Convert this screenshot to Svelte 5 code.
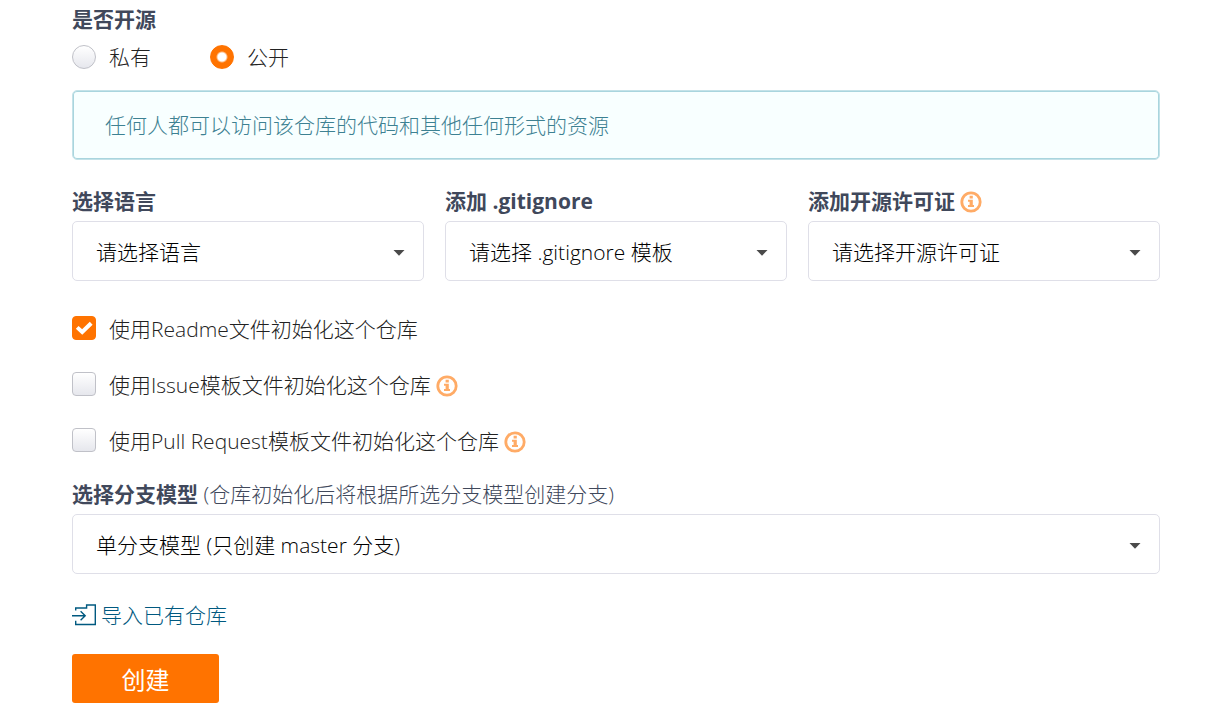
<script lang="ts">
	let visibility = $state('public');
	let language = $state('');
	let gitignore = $state('');
	let license = $state('');
	let branchModel = $state('single');
	let useReadme = $state(true);
	let useIssue = $state(false);
	let usePull = $state(false);

	function handleSubmit(event: SubmitEvent) {
		event.preventDefault();
	}
</script>

{#snippet infoIcon()}
	<svg class="info" width="22" height="22" viewBox="0 0 22 22" aria-hidden="true">
		<circle cx="11" cy="11" r="9.2" fill="none" stroke="currentColor" stroke-width="2.8" />
		<path d="M9.6 4.8h3.2v2.6H9.6zM8 8.8h4.8v5.3H14V16H8v-1.9h1.6v-3.4H8z" fill="currentColor" />
	</svg>
{/snippet}

{#snippet caret()}
	<svg class="caret" width="12" height="6" viewBox="0 0 12 6" aria-hidden="true">
		<path d="M0.5 0h11L6 5.8z" fill="#4a4a4a" />
	</svg>
{/snippet}

<form class="repo-form" onsubmit={handleSubmit}>
	<fieldset class="visibility">
		<legend class="title">是否开源</legend>
		<div class="radios">
			<label class="choice">
				<input type="radio" name="visibility" value="private" bind:group={visibility} />
				<span>私有</span>
			</label>
			<label class="choice">
				<input type="radio" name="visibility" value="public" bind:group={visibility} />
				<span>公开</span>
			</label>
		</div>
	</fieldset>

	<div class="notice">任何人都可以访问该仓库的代码和其他任何形式的资源</div>

	<div class="columns">
		<div class="field">
			<label class="title" for="language">选择语言</label>
			<div class="select">
				<select id="language" bind:value={language}>
					<option value="">请选择语言</option>
				</select>
				{@render caret()}
			</div>
		</div>
		<div class="field">
			<label class="title" for="gitignore">添加 .gitignore</label>
			<div class="select">
				<select id="gitignore" bind:value={gitignore}>
					<option value="">请选择 .gitignore 模板</option>
				</select>
				{@render caret()}
			</div>
		</div>
		<div class="field">
			<label class="title" for="license">添加开源许可证{@render infoIcon()}</label>
			<div class="select">
				<select id="license" bind:value={license}>
					<option value="">请选择开源许可证</option>
				</select>
				{@render caret()}
			</div>
		</div>
	</div>

	<div class="checks">
		<label class="choice">
			<input type="checkbox" bind:checked={useReadme} />
			<span>使用Readme文件初始化这个仓库</span>
		</label>
		<label class="choice">
			<input type="checkbox" bind:checked={useIssue} />
			<span>使用Issue模板文件初始化这个仓库{@render infoIcon()}</span>
		</label>
		<label class="choice">
			<input type="checkbox" bind:checked={usePull} />
			<span>使用Pull Request模板文件初始化这个仓库{@render infoIcon()}</span>
		</label>
	</div>

	<div class="field">
		<label class="title" for="branch-model">选择分支模型 <small>(仓库初始化后将根据所选分支模型创建分支)</small></label>
		<div class="select">
			<select id="branch-model" bind:value={branchModel}>
				<option value="single">单分支模型 (只创建 master 分支)</option>
			</select>
			{@render caret()}
		</div>
	</div>

	<a class="import" href="#import">
		<svg width="25" height="24" viewBox="0 0 25 24" fill="none" stroke="currentColor" stroke-width="1.4" aria-hidden="true">
			<path d="M3.7 7.5V5H14.6V2h8.7v19.5H3.7V17.8" />
			<path d="M0 12.7h13M8.6 8.2l4.6 4.5-4.6 4.5" />
		</svg>
		<span>导入已有仓库</span>
	</a>

	<button class="submit" type="submit">创建</button>
</form>

<style>
	:global(body) {
		background: #fff;
	}

	.repo-form {
		display: flex;
		flex-direction: column;
		padding: 4px 55px 24px 72px;
		font-family: 'Open Sans', 'Noto Sans CJK SC', sans-serif;
		font-size: 21px;
		font-weight: 300;
		line-height: 30px;
		color: #222;
	}

	.visibility {
		margin: 0;
		padding: 0;
		border: 0;
	}

	.title {
		display: block;
		padding: 0;
		font-weight: 700;
		color: #40485b;
	}

	.title small {
		font-size: 21px;
		font-weight: 300;
	}

	.radios {
		display: flex;
		gap: 59px;
		margin-top: 8px;
	}

	.choice {
		display: flex;
		align-items: center;
		gap: 13px;
	}

	.choice input {
		appearance: none;
		flex: none;
		width: 24px;
		height: 24px;
		margin: 0;
		border: 1px solid #c0c1c8;
		border-radius: 4px;
		background: linear-gradient(#fff, #e6e7ed);
	}

	.choice input[type='radio'] {
		border-radius: 50%;
	}

	.choice input[type='radio']:checked {
		border-color: #ff7300;
		background: radial-gradient(circle, #fff 4px, #ff7300 6px);
	}

	.choice input[type='checkbox']:checked {
		border-color: #ff7300;
		background: #ff7300
			url("data:image/svg+xml,%3Csvg xmlns='http://www.w3.org/2000/svg' viewBox='0 0 22 22'%3E%3Cpath d='M4.2 10.4l5 4.6 9-8.8' fill='none' stroke='%23fff' stroke-width='4'/%3E%3C/svg%3E")
			center / 22px 22px no-repeat;
	}

	.notice {
		margin-top: 18px;
		padding: 19px 32px;
		border: 1px solid #c4e2e8;
		border-radius: 5px;
		background: #f8ffff;
		box-shadow: inset 0 0 0 1px #a9d5de;
		color: #3d8192;
	}

	.columns {
		display: grid;
		grid-template-columns: 352fr 342fr 352fr;
		gap: 21px;
		margin-top: 26px;
	}

	.select {
		position: relative;
		margin-top: 5px;
	}

	.select select {
		appearance: none;
		display: block;
		box-sizing: border-box;
		width: 100%;
		height: 60px;
		padding: 1px 40px 0 23px;
		border: 1px solid #dfdfe8;
		border-radius: 5px;
		background: #fff;
		font: inherit;
		color: #000;
	}

	.caret {
		position: absolute;
		top: 29px;
		right: 19px;
		pointer-events: none;
	}

	.info {
		margin-left: 5px;
		vertical-align: -4px;
		color: #ffab66;
	}

	.checks {
		display: flex;
		flex-direction: column;
		gap: 26px;
		margin: 33px 0 23px;
	}

	.checks .choice {
		align-items: flex-start;
	}

	.checks input {
		margin-top: 2px;
	}

	.import {
		display: flex;
		align-items: center;
		align-self: flex-start;
		gap: 4px;
		margin-top: 26px;
		color: #005980;
		text-decoration: none;
	}

	.submit {
		align-self: flex-start;
		min-width: 147px;
		height: 49px;
		margin-top: 24px;
		padding: 0 48px;
		border: 0;
		border-radius: 3px;
		background: #ff7300;
		color: #fff;
		font-family: inherit;
		font-size: 24px;
		font-weight: 400;
	}
</style>
